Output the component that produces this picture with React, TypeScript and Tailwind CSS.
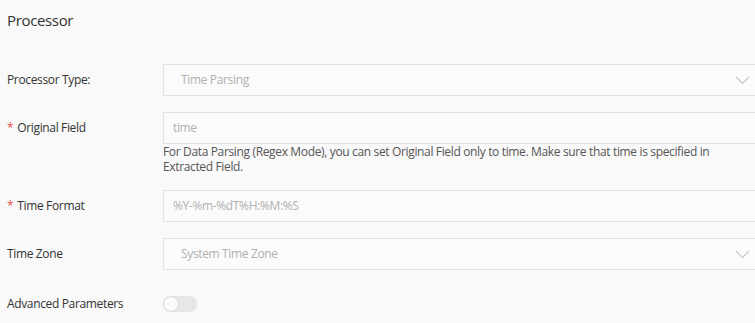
const font = { fontFamily: '"Open Sans", "Noto Sans", sans-serif', letterSpacing: "-0.35px" };

function Label({ text, required }: { text: string; required?: boolean }) {
  return (
    <div className="w-[156px] shrink-0 h-8 flex items-center text-[12px] text-[#333]">
      {required && <span className="text-[#e84a4a] mr-[4px]">*</span>}
      {text}
    </div>
  );
}

function SelectBox({ value }: { value: string }) {
  return (
    <div className="relative w-[600px] shrink-0 h-8 border border-[#e3e3e3] bg-[#fbfbfb] flex items-center pl-[17px] text-[12px] text-[#b0b0b0]">
      {value}
      <svg
        className="absolute left-[571px] top-[11px]"
        width="15"
        height="9"
        viewBox="0 0 15 9"
        fill="none"
      >
        <polyline points="1,1 7.5,7.5 14,1" stroke="#c4c4c4" strokeWidth="1.1" />
      </svg>
    </div>
  );
}

function TextBox({ value }: { value: string }) {
  return (
    <div className="w-[600px] shrink-0 h-8 border border-[#e3e3e3] bg-[#fbfbfb] flex items-center pl-[9px] text-[12px] text-[#b0b0b0]">
      {value}
    </div>
  );
}

export default function App() {
  // Formulario del procesador de tiempo
  return (
    <div
      className="w-full h-[323px] overflow-hidden bg-[#f9f9f9] pl-[7px]"
      style={font}
    >
      <h2 className="text-[15px] text-[#333] pt-[9px] leading-[22px]">Processor</h2>
      <div className="flex flex-col gap-4 mt-[33px]">
        <div className="flex">
          <Label text="Processor Type:" />
          <SelectBox value="Time Parsing" />
        </div>
        <div className="flex">
          <Label text="Original Field" required />
          <div className="flex flex-col">
            <TextBox value="time" />
            <p className="w-[580px] text-[12px] leading-[15px] text-[#555]">
              For Data Parsing (Regex Mode), you can set Original Field only to time. Make sure
              that time is specified in Extracted Field.
            </p>
          </div>
        </div>
        <div className="flex">
          <Label text="Time Format" required />
          <TextBox value="%Y-%m-%dT%H:%M:%S" />
        </div>
        <div className="flex">
          <Label text="Time Zone" />
          <SelectBox value="System Time Zone" />
        </div>
        <div className="flex items-center mt-[2px]">
          <Label text="Advanced Parameters" />
          <div className="w-[34px] h-[16px] rounded-full bg-[#e6e6e6] flex items-center px-[1px]">
            <div className="w-[14px] h-[14px] rounded-full bg-[#fafafa] shadow-[0_0_2px_rgba(0,0,0,0.2)]" />
          </div>
        </div>
      </div>
    </div>
  );
}
